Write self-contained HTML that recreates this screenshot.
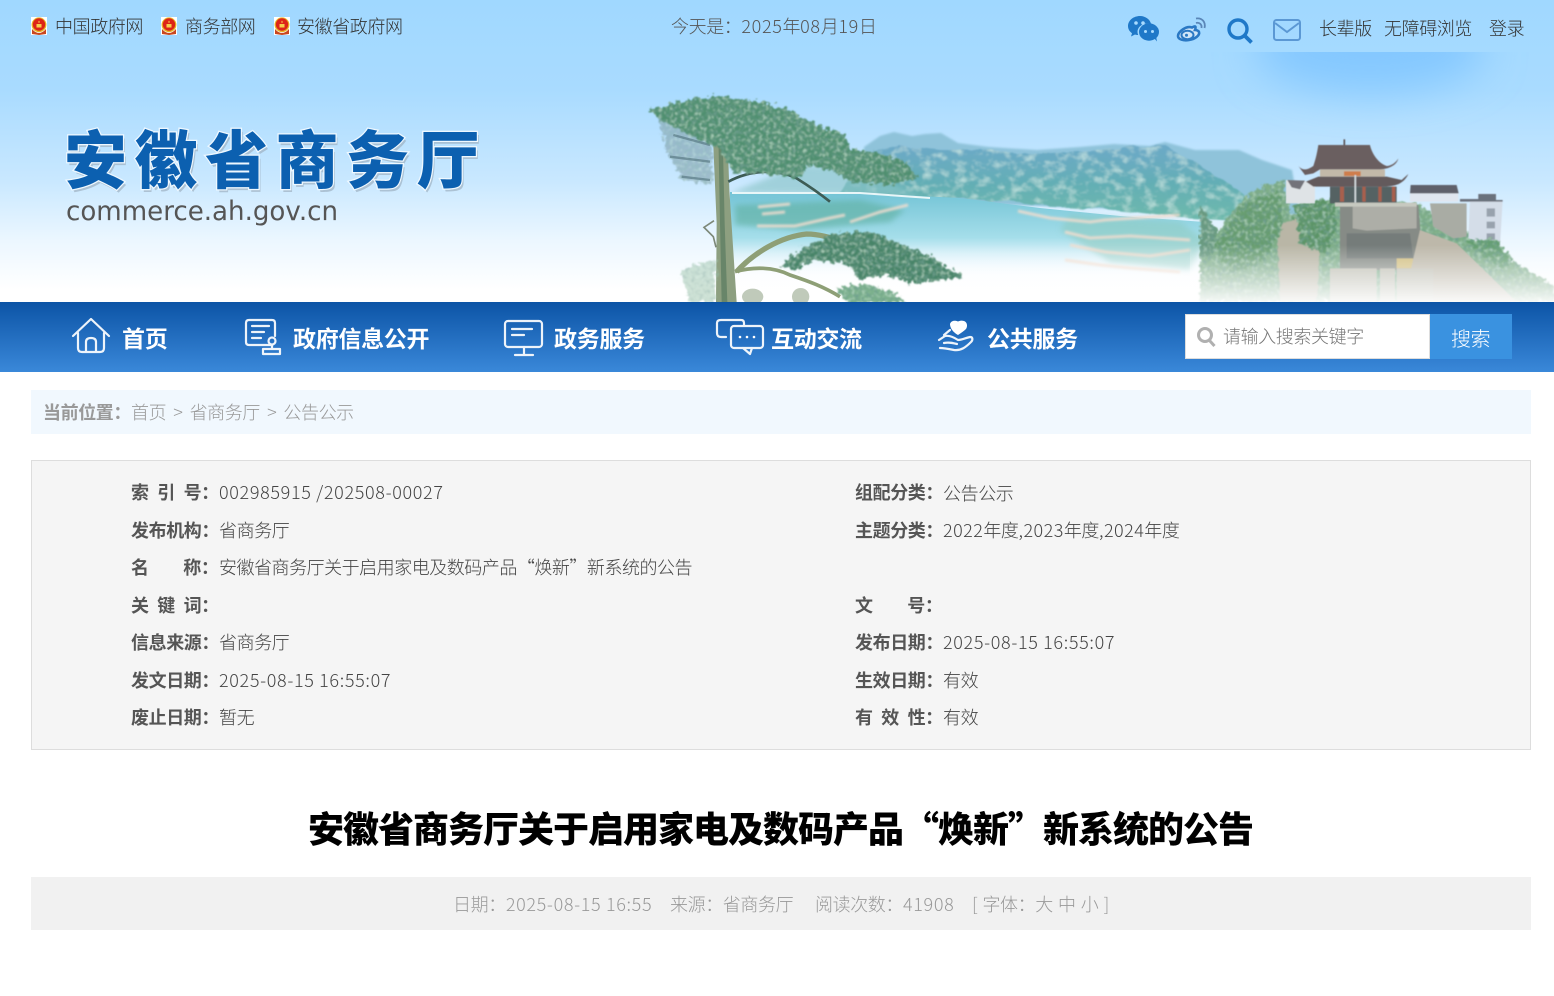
<!DOCTYPE html>
<html lang="zh-CN"><head><meta charset="utf-8"><title>安徽省商务厅</title>
<style>
html,body{margin:0;padding:0;width:1554px;height:996px;overflow:hidden;background:#fff}
body{position:relative;font-family:"Liberation Sans","Noto Sans CJK SC",sans-serif}
.t{position:absolute;white-space:pre;font-family:"Noto Sans CJK SC","Liberation Sans",sans-serif;font-size:18px;line-height:26px;letter-spacing:-.4px;font-weight:300}
.d{letter-spacing:.65px}
.b{font-weight:700}
.top{color:#333}
.nav{color:#fff;font-weight:700;font-size:23px;line-height:30px;letter-spacing:-.3px;top:322px}
.m{color:#444}
.l{color:#555;font-weight:700}
.box{position:absolute}
svg{position:absolute;left:0;top:0}
</style></head><body>
<svg width="1554" height="302" viewBox="0 0 1554 302">
<defs>
<linearGradient id="sky" x1="0" y1="0" x2="0" y2="1"><stop offset="0" stop-color="#a0d8ff"/><stop offset=".3" stop-color="#a9dbff"/><stop offset=".6" stop-color="#c9e8ff"/><stop offset=".8" stop-color="#ecf7ff"/><stop offset=".96" stop-color="#fff"/></linearGradient>
<linearGradient id="lake" x1="0" y1="0" x2="0" y2="1"><stop offset="0" stop-color="#74c4d6"/><stop offset=".55" stop-color="#a5deea"/><stop offset="1" stop-color="#e9f7fe" stop-opacity="0"/></linearGradient>
<linearGradient id="mt" x1="0" y1="0" x2="0" y2="1"><stop offset="0" stop-color="#6da9c8"/><stop offset=".5" stop-color="#63aeb5"/><stop offset="1" stop-color="#6fbaab"/></linearGradient>
<linearGradient id="fade" x1="0" y1="0" x2="0" y2="1"><stop offset="0" stop-color="#fff" stop-opacity="0"/><stop offset="1" stop-color="#fff" stop-opacity=".92"/></linearGradient>
<clipPath id="patch"><rect x="1150" y="52" width="404" height="120"/></clipPath>
<filter id="bl05" x="-5%" y="-5%" width="110%" height="110%"><feGaussianBlur stdDeviation="1.400"/></filter>
<filter id="bl1" x="-20%" y="-20%" width="140%" height="140%"><feGaussianBlur stdDeviation="1"/></filter>
<filter id="bl3" x="-30%" y="-30%" width="160%" height="160%"><feGaussianBlur stdDeviation="3"/></filter>
<filter id="bl20" x="-50%" y="-80%" width="200%" height="260%"><feGaussianBlur stdDeviation="20"/></filter>
<filter id="leaf" x="-10%" y="-10%" width="120%" height="120%">
<feTurbulence type="fractalNoise" baseFrequency=".07" numOctaves="3" seed="4" result="r1"/>
<feDisplacementMap in="SourceGraphic" in2="r1" scale="30" xChannelSelector="R" yChannelSelector="G" result="d"/>
<feTurbulence type="fractalNoise" baseFrequency=".09" numOctaves="2" seed="7" result="r2"/>
<feColorMatrix in="r2" type="matrix" values="0 0 0 0 .16 0 0 0 0 .34 0 0 0 0 .28 2.400 0 0 0 -1.050" result="dk"/>
<feComposite in="dk" in2="d" operator="in" result="s1"/>
<feColorMatrix in="r2" type="matrix" values="0 0 0 0 .5 0 0 0 0 .72 0 0 0 0 .58 0 2 0 0 -1" result="lt"/>
<feComposite in="lt" in2="d" operator="in" result="s2"/>
<feMerge result="mg"><feMergeNode in="d"/><feMergeNode in="s1"/><feMergeNode in="s2"/></feMerge>
<feGaussianBlur in="mg" stdDeviation="2"/>
</filter>
<filter id="mtn" x="-5%" y="-5%" width="110%" height="110%">
<feTurbulence type="fractalNoise" baseFrequency=".04" numOctaves="3" seed="9" result="r1"/>
<feDisplacementMap in="SourceGraphic" in2="r1" scale="8" xChannelSelector="R" yChannelSelector="G" result="d"/>
<feTurbulence type="fractalNoise" baseFrequency=".09 .13" numOctaves="3" seed="3" result="r2"/>
<feColorMatrix in="r2" type="matrix" values="0 0 0 0 .6 0 0 0 0 .82 0 0 0 0 .78 1.800 0 0 0 -.85" result="lt"/>
<feComposite in="lt" in2="d" operator="in" result="s"/>
<feMerge result="mg"><feMergeNode in="d"/><feMergeNode in="s"/></feMerge>
<feGaussianBlur in="mg" stdDeviation=".8"/>
</filter>
<filter id="rock" x="-5%" y="-5%" width="110%" height="110%">
<feTurbulence type="fractalNoise" baseFrequency=".04" numOctaves="3" seed="9" result="r1"/>
<feDisplacementMap in="SourceGraphic" in2="r1" scale="14" xChannelSelector="R" yChannelSelector="G"/>
<feGaussianBlur stdDeviation="2"/>
</filter>
</defs>
<rect width="1554" height="302" fill="url(#sky)"/>
<g clip-path="url(#patch)"><ellipse cx="1370" cy="50" rx="115" ry="42" fill="#84c8ff" filter="url(#bl20)"/></g>
<!-- far mountains -->
<path d="M864 147L880 136 894 132 912 136 925 134 941 133 958 143 989 147 1037 150 1080 147 1114 144 1150 146 1165 142 1195 150 1239 150 1262 160 1292 170 1300 215 864 200Z" fill="#8fc3da" filter="url(#bl1)"/>
<path d="M872 152L900 145 940 150 985 150 1035 154 1085 151 1120 148 1165 146 1200 165 1245 195 1262 222 1180 218 1100 208 1040 205 990 200 930 198 840 194Z" fill="url(#mt)" filter="url(#mtn)"/>
<path d="M730 193L800 165 860 168 920 196Z" fill="#8ac4c8" opacity=".65" filter="url(#bl3)"/>
<!-- lake -->
<path d="M730 192L880 194 960 198 1040 208 1120 216 1205 222 1205 275 730 275Z" fill="url(#lake)"/>
<path d="M732 193L860 193 930 198" stroke="#e8f6f8" stroke-width="2" fill="none"/>
<path d="M735 205L860 200 905 210 890 222 800 230 735 225Z" fill="#5dae9e" opacity=".6" filter="url(#bl3)"/>
<path d="M1070 215L1180 222 1205 240 1190 270 1110 262 1060 230Z" fill="#8cc9be" opacity=".55" filter="url(#bl3)"/>
<g fill="none" stroke="#f2ddcf" stroke-width="3" opacity=".85" filter="url(#bl1)">
<path d="M758 207L790 204M762 214L785 212M757 226L795 226 830 218 845 215M850 222L880 212 908 205"/>
<path d="M1018 211L1050 218 1090 222 1105 220 1180 215"/>
<path d="M1065 232L1090 238 1130 236 1190 240"/>
<path d="M1070 245L1105 252 1150 256 1190 250M1065 260L1100 265 1130 268 1180 272"/>
</g>
<rect x="730" y="245" width="480" height="57" fill="url(#fade)"/>
<!-- pine -->
<g transform="translate(640 90) scale(.3333)">
<path d="M218 120L262 120 268 300 285 560 290 636 228 636 230 400Z" fill="#8d9f80"/>
<path d="M235 130L248 130 254 400 262 636 245 636 240 400Z" fill="#5f7e63" opacity=".8"/>
<path d="M265 275C330 240 410 235 470 265 510 290 545 315 570 335" fill="none" stroke="#3d5b55" stroke-width="8" filter="url(#bl1)"/>
<path d="M222 392L192 412 220 440 228 472" fill="none" stroke="#7d8878" stroke-width="5" filter="url(#bl1)"/>
<path d="M55 85L215 125 215 285 130 270 80 190Z" fill="#7d9aa3" opacity=".55" filter="url(#leaf)"/>
<path d="M100 135L210 165M90 200L210 215M125 260L210 270" stroke="#50707a" stroke-width="7" fill="none" opacity=".6" filter="url(#bl1)"/>
<path d="M30 60L130 32 220 20 350 32 450 62 530 105 610 130 630 175 720 190 795 215 835 262 745 288 620 270 590 245 495 225 490 262 400 255 275 245 240 175 180 150 60 90Z" fill="#4f8f6f" filter="url(#leaf)"/>
<path d="M290 545C340 490 420 440 500 432 560 432 610 460 660 470" fill="none" stroke="#8e9f76" stroke-width="16" filter="url(#bl1)"/>
<path d="M285 545C340 530 400 530 450 555 510 575 550 590 600 620" fill="none" stroke="#8e9f76" stroke-width="11" filter="url(#bl1)"/>
<path d="M420 530L490 470 590 430 690 425 800 470 880 505 970 560 870 575 810 578 740 555 660 570 620 520 520 510 470 540Z" fill="#478468" filter="url(#leaf)"/>
<path d="M590 595L680 580 760 610 805 640 620 640Z" fill="#7cb08c" filter="url(#leaf)"/>
<path d="M120 540L230 505 225 636 150 636Z" fill="#a6cab4" opacity=".55" filter="url(#leaf)"/>
<ellipse cx="338" cy="620" rx="32" ry="24" fill="#c0caba"/><ellipse cx="482" cy="620" rx="26" ry="26" fill="#c0caba"/>
</g>
<!-- temple hill -->
<g transform="translate(1200 130) scale(.3333)">
<path d="M0 330L40 290 60 305 100 240 160 180 250 150 270 250 400 210 650 220 800 310 900 370 1000 430 1062 470 1062 516 0 516Z" fill="#7fae88" filter="url(#leaf)"/>
<path d="M230 280L290 270 360 360 350 516 240 516Z" fill="#b9b6a6" filter="url(#rock)"/>
<path d="M280 220L400 205 410 290 380 370 300 340Z" fill="#5b9466" filter="url(#leaf)"/>
<path d="M40 350L120 230 240 180 250 290 190 390 100 430Z" fill="#669c6e" filter="url(#leaf)"/>
<path d="M0 230L50 300 40 370 0 390Z" fill="#67997f" filter="url(#leaf)"/>
<g filter="url(#bl05)">
<path d="M420 225H655L670 420H420Z" fill="#868b86"/>
<path d="M458 225H650V295L500 302 458 295Z" fill="#adaea7"/>
<path d="M440 310H630L640 385H440Z" fill="#747c7a"/>
<path d="M590 385H640V415H590Z" fill="#d1be7f"/>
<path d="M660 300L770 340 950 516H610Z" fill="#bdb8aa"/>
<path d="M390 415H530V516H390ZM540 415H585V516H540ZM590 415H700V516H590Z" fill="#bcbcb0"/>
<path d="M690 220H800V320L760 325 700 290Z" fill="#a9aca4"/>
<path d="M810 210H908L900 348 805 325Z" fill="#d4dde8"/>
<path d="M835 192H888V210H908V215H780V207H835Z" fill="#6a717c"/>
<path d="M860 235H885V260H860ZM860 275H885V295H860ZM860 310H885V330H860Z" fill="#98a2ad"/>
<path d="M630 188H775V215H630Z" fill="#e0e6ef"/>
<path d="M632 165H770L776 190H630Z" fill="#5f616b"/>
<path d="M258 150L345 155V220H258Z" fill="#dfe3e6"/>
<path d="M262 150L315 152 300 178 275 172Z" fill="#73737a"/>
<path d="M390 170H590V220H390Z" fill="#556264"/>
<path d="M420 170H432V215H420ZM487 170H497V215H487ZM535 170H545V215H535ZM576 170H586V215H576Z" fill="#a8604e"/>
<path d="M360 118H555V140H360Z" fill="#c3b9a9"/>
<path d="M432 124H482V138H432Z" fill="#cf7d4b"/>
<path d="M355 45L510 45C515 70 535 100 560 108 575 108 590 95 595 85 590 110 555 120 530 118L360 118 340 130 315 135 295 108C310 125 325 118 340 108 348 85 352 65 355 45Z" fill="#6b5f60"/>
<path d="M355 140H560L605 150 625 132C610 165 580 170 545 170H340L318 155Z" fill="#635a5c"/>
<path d="M433 28V45" stroke="#5b5354" stroke-width="5"/>
<path d="M466 135V218" stroke="#d3dadd" stroke-width="5"/>
<path d="M405 218H650V230H405Z" fill="#c7c9c0"/>
</g>
<path d="M800 330L890 330 940 390 900 420Z" fill="#649e70" filter="url(#leaf)"/>
</g>
<rect x="1190" y="245" width="364" height="57" fill="url(#fade)"/>
<!-- emblems -->
<g transform="translate(31 17)"><rect width="16" height="18" fill="#fff"/><path d="M1 12Q8 20 15 12L15 17 8 18 1 17Z" fill="#c9471f"/><circle cx="8" cy="7.800" r="7.400" fill="#e8b422"/><circle cx="8" cy="7.500" r="6.200" fill="#dd2518"/><path d="M5.500 7H10.500V10.500H5.500Z" fill="#f6cf4b"/><path d="M8 3.500L9 5.500H7Z" fill="#f6cf4b"/></g>
<g transform="translate(161 17)"><rect width="16" height="18" fill="#fff"/><path d="M1 12Q8 20 15 12L15 17 8 18 1 17Z" fill="#c9471f"/><circle cx="8" cy="7.800" r="7.400" fill="#e8b422"/><circle cx="8" cy="7.500" r="6.200" fill="#dd2518"/><path d="M5.500 7H10.500V10.500H5.500Z" fill="#f6cf4b"/><path d="M8 3.500L9 5.500H7Z" fill="#f6cf4b"/></g>
<g transform="translate(274 17)"><rect width="16" height="18" fill="#fff"/><path d="M1 12Q8 20 15 12L15 17 8 18 1 17Z" fill="#c9471f"/><circle cx="8" cy="7.800" r="7.400" fill="#e8b422"/><circle cx="8" cy="7.500" r="6.200" fill="#dd2518"/><path d="M5.500 7H10.500V10.500H5.500Z" fill="#f6cf4b"/><path d="M8 3.500L9 5.500H7Z" fill="#f6cf4b"/></g>
<!-- top icons -->
<g fill="#1f78c8">
<path d="M1140 16C1133.500 16 1128 20.400 1128 26C1128 29 1129.500 31.500 1132 33.200L1131 36.500 1135 34.500C1136 34.800 1137 35 1138.200 35C1137.700 33.800 1137.500 32.800 1137.500 31.800C1137.500 27.200 1142 23.400 1148 23.400L1151 23.800C1150 19.400 1145.400 16 1140 16Z"/>
<ellipse cx="1149" cy="32" rx="10" ry="8.700"/><path d="M1154 38L1157 41.500 1156 36Z"/>
</g>
<g fill="#a9dbff"><circle cx="1136" cy="23" r="1.800"/><circle cx="1143" cy="23" r="1.800"/><circle cx="1145.500" cy="31.500" r="1.500"/><circle cx="1152.500" cy="31.500" r="1.500"/></g>
<g fill="none" stroke="#2a78c4">
<path d="M1192 27.500C1186 25.500 1178 32 1178 36C1178 39.500 1184 41 1189 40C1195 39 1200 35.500 1199 32C1198.500 30.500 1196 30 1195 30C1196.500 26 1195 25.500 1192 27.500Z" stroke-width="2.600" fill="#cfe5f8"/>
<ellipse cx="1187.500" cy="35" rx="6" ry="4.200" stroke-width="2"/>
<circle cx="1186.500" cy="35.300" r="1.500" fill="#2a78c4" stroke="none"/>
<path d="M1196 23C1199.500 22 1202 24.500 1201.500 28M1196 18.500C1202 17.500 1206 22 1204.500 28" stroke-width="1.800" stroke="#5a86b8"/>
<circle cx="1238" cy="29" r="9" stroke-width="3.400" stroke="#1f78c8"/>
<path d="M1244.500 35.500L1251.500 42.500" stroke-width="3.800" stroke="#1f78c8"/>
<rect x="1274" y="20" width="26" height="20" rx="2.500" stroke-width="2" stroke="#5b98d4"/>
<path d="M1275 23L1287 32 1299 23" stroke-width="2" stroke="#5b98d4"/>
</g>
<!-- logo -->
<text x="64" y="183" font-family="Noto Sans CJK SC,sans-serif" font-weight="900" font-size="63" letter-spacing="7.500" fill="#9fb2c2" opacity=".7" transform="translate(2 3)">安徽省商务厅</text>
<text x="64" y="183" font-family="Noto Sans CJK SC,sans-serif" font-weight="900" font-size="63" letter-spacing="7.500" fill="#0c60b0" stroke="#eef8ff" stroke-width="2.500" paint-order="stroke">安徽省商务厅</text>
<text x="66" y="220" font-family="DejaVu Sans,sans-serif" font-size="27" fill="#555" textLength="272" lengthAdjust="spacingAndGlyphs">commerce.ah.gov.cn</text>
</svg>

<span class="t top" style="left:55px;top:13px">中国政府网</span>
<span class="t top" style="left:185px;top:13px">商务部网</span>
<span class="t top" style="left:297px;top:13px">安徽省政府网</span>
<span class="t" style="left:671px;top:13px;color:#555">今天是：<span class="d">2025</span>年<span class="d">08</span>月<span class="d">19</span>日</span>
<span class="t top" style="left:1319px;top:15px">长辈版</span>
<span class="t top" style="left:1384px;top:15px">无障碍浏览</span>
<span class="t top" style="left:1489px;top:15px">登录</span>

<div class="box" style="left:0;top:302px;width:1554px;height:70px;background:linear-gradient(#0c54a6,#3a88d9)"></div>
<svg width="1554" height="372" viewBox="0 0 1554 372" style="pointer-events:none">
<g fill="none" stroke="#fff" stroke-width="2.200" stroke-linejoin="round" stroke-linecap="round" opacity=".92">
<path d="M73 336L91 319 109 336M78 333V348Q78 352 82 352H100Q104 352 104 348V333M86 352V342Q86 338 91 338 96 338 96 342V352"/>
<path d="M271 345H249Q246 345 246 342V323Q246 320 249 320H272Q275 320 275 323V336"/>
<path d="M252 326H269M252 332H264M252 338H261"/>
<circle cx="272" cy="341" r="3.500"/><path d="M272 345V348M263 349H280V354H263Z"/>
<rect x="505" y="321" width="37" height="26" rx="3"/><path d="M524 347V354M515 355H533M512 329H532M512 335H524"/>
<path d="M726 337H721Q717 337 717 333V323Q717 320 721 320H741Q744 320 744 323V325"/>
<rect x="731" y="326" width="32" height="22" rx="3"/><path d="M743 348L750 354 752 348"/>
<path d="M939 340L945 336C950 335 955 338 958 340 962 340 965 338 970 337 973 337 973 340 971 342 966 347 961 351 954 350 949 349 944 348 940 348M944 343C949 342 953 343 957 344M950 330L944 335"/>
</g>
<path d="M958 335C951 331 950 326 950 324 951 321 954 320 958 321.500 959 321 961 320 964 321 967 322 968 326 966 329 964 331 961 333 958 335Z" fill="#fff"/>
<g fill="#fff"><circle cx="740" cy="337" r="1.300"/><circle cx="747" cy="337" r="1.300"/><circle cx="754" cy="337" r="1.300"/></g>
</svg>
<span class="t nav" style="left:122px">首页</span>
<span class="t nav" style="left:293px">政府信息公开</span>
<span class="t nav" style="left:554px">政务服务</span>
<span class="t nav" style="left:771px">互动交流</span>
<span class="t nav" style="left:987px">公共服务</span>

<div class="box" style="left:1185px;top:314px;width:243px;height:43px;background:#fff;border:1px solid #ddd"></div>
<svg width="1554" height="372" viewBox="0 0 1554 372"><circle cx="1205" cy="335" r="6.500" fill="none" stroke="#b0b0b0" stroke-width="3"/><path d="M1209.500 340.500L1214.500 346" stroke="#b0b0b0" stroke-width="3"/></svg>
<span class="t" style="left:1223px;top:323px;color:#777">请输入搜索关键字</span>
<div class="box" style="left:1430px;top:314px;width:82px;height:45px;background:#3a92e0"></div>
<span class="t" style="left:1451px;top:325px;color:#fff;font-size:20px">搜索</span>

<div class="box" style="left:31px;top:390px;width:1500px;height:44px;background:#f1f8fe"></div>
<span class="t b" style="left:43px;top:399px;color:#999">当前位置：</span>
<span class="t" style="left:131px;top:399px;color:#999;word-spacing:3.500px">首页 &gt; 省商务厅 &gt; 公告公示</span>

<div class="box" style="left:31px;top:460px;width:1498px;height:288px;background:#f5f5f5;border:1px solid #ddd"></div>

<span class="t l" style="left:131px;top:479px;word-spacing:5px">索 引 号：</span><span class="t m d" style="left:219px;top:479px">002985915 /202508-00027</span>
<span class="t l" style="left:131px;top:517px">发布机构：</span><span class="t m" style="left:219px;top:517px">省商务厅</span>
<span class="t l" style="left:131px;top:554px;word-spacing:31px">名 称：</span><span class="t m" style="left:219px;top:554px;letter-spacing:-.48px">安徽省商务厅关于启用家电及数码产品“焕新”新系统的公告</span>
<span class="t l" style="left:131px;top:592px;word-spacing:5px">关 键 词：</span>
<span class="t l" style="left:131px;top:629px">信息来源：</span><span class="t m" style="left:219px;top:629px">省商务厅</span>
<span class="t l" style="left:131px;top:667px">发文日期：</span><span class="t m d" style="left:219px;top:667px">2025-08-15 16:55:07</span>
<span class="t l" style="left:131px;top:704px">废止日期：</span><span class="t m" style="left:219px;top:704px">暂无</span>

<span class="t l" style="left:855px;top:479px">组配分类：</span><span class="t m" style="left:943px;top:480px">公告公示</span>
<span class="t l" style="left:855px;top:517px">主题分类：</span><span class="t m" style="left:943px;top:517px"><span class="d" style="letter-spacing:.45px">2022</span>年度<span class="d" style="letter-spacing:.45px">,2023</span>年度<span class="d" style="letter-spacing:.45px">,2024</span>年度</span>
<span class="t l" style="left:855px;top:592px;word-spacing:31px">文 号：</span>
<span class="t l" style="left:855px;top:629px">发布日期：</span><span class="t m d" style="left:943px;top:629px">2025-08-15 16:55:07</span>
<span class="t l" style="left:855px;top:667px">生效日期：</span><span class="t m" style="left:943px;top:667px">有效</span>
<span class="t l" style="left:855px;top:704px;word-spacing:5px">有 效 性：</span><span class="t m" style="left:943px;top:704px">有效</span>

<span class="t" style="left:308px;top:804px;font-size:36px;line-height:46px;font-weight:900;color:#000;letter-spacing:-1px">安徽省商务厅关于启用家电及数码产品“焕新”新系统的公告</span>
<div class="box" style="left:31px;top:877px;width:1500px;height:53px;background:#f1f1f1"></div>
<span class="t" style="left:453px;top:891px;color:#999">日期：<span class="d">2025-08-15 16:55</span></span>
<span class="t" style="left:670px;top:891px;color:#999">来源：省商务厅</span>
<span class="t" style="left:815px;top:891px;color:#999">阅读次数：<span class="d">41908</span></span>
<span class="t" style="left:972px;top:891px;color:#999;word-spacing:1.600px">[ 字体：大 中 小 ]</span>
</body></html>
